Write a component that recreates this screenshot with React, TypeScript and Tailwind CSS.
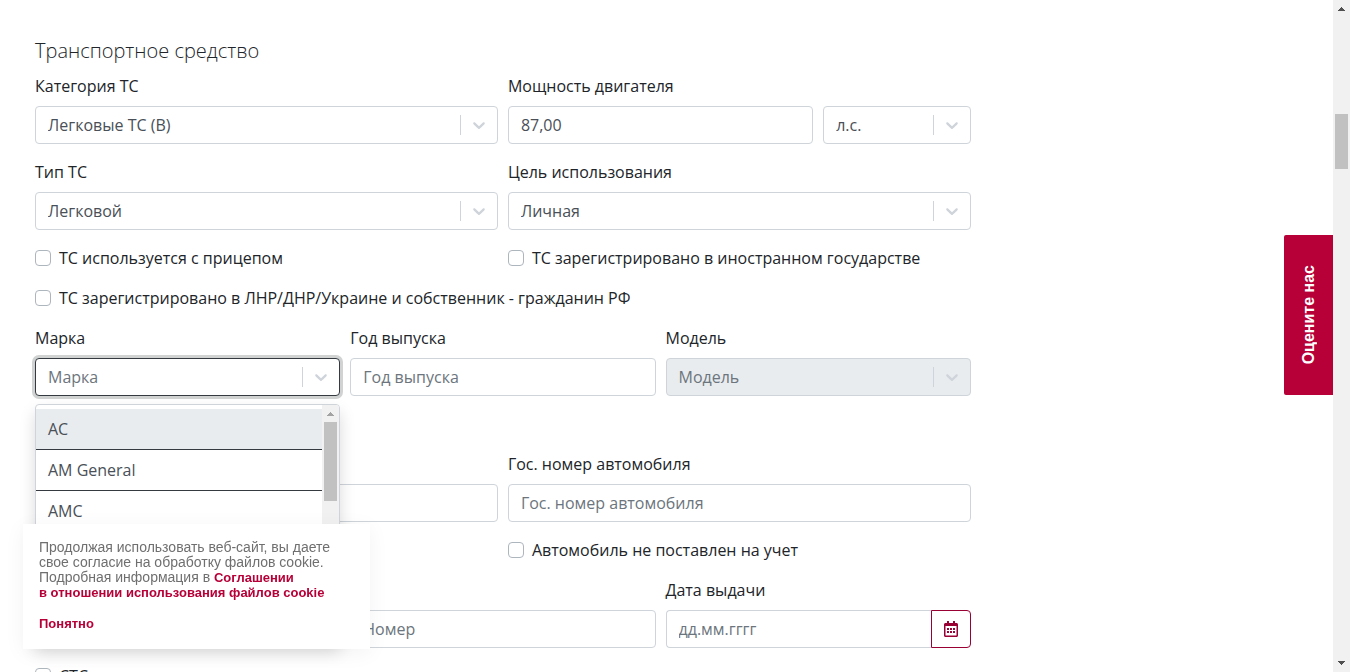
import React from "react";
import { FaRegCalendarAlt } from "react-icons/fa";

const control =
  "block h-[38px] w-full min-w-0 appearance-none rounded border border-[#ced4da] bg-white px-3 text-base text-[#495057] placeholder:text-[#6c757d] placeholder:opacity-100 outline-none";

function Label({ htmlFor, children }: { htmlFor: string; children?: React.ReactNode }) {
  return (
    <label htmlFor={htmlFor} className="mb-2 block h-6 text-[#212529]">
      {children}
    </label>
  );
}

function Indicator() {
  return (
    <span className="pointer-events-none col-start-1 row-start-1 flex items-center self-center justify-self-end pr-px">
      <span className="h-5 w-px bg-[#ced4da]" />
      <svg viewBox="0 0 20 20" className="mx-2 h-5 w-5 fill-[#ced4da]" aria-hidden="true">
        <path d="M4.516 7.548c0.436-0.446 1.043-0.481 1.576 0l3.908 3.747 3.908-3.747c0.533-0.481 1.141-0.446 1.574 0 0.436 0.445 0.408 1.197 0 1.615-0.406 0.418-4.695 4.502-4.695 4.502-0.217 0.223-0.502 0.335-0.787 0.335s-0.57-0.112-0.789-0.335c0 0-4.287-4.084-4.695-4.502s-0.436-1.17 0-1.615z" />
      </svg>
    </span>
  );
}

function Select({ id, value, label, disabled = false }: { id: string; value: string; label?: string; disabled?: boolean }) {
  return (
    <div className="grid grid-cols-1">
      <select
        id={id}
        aria-label={label}
        disabled={disabled}
        className={
          control +
          " col-start-1 row-start-1 disabled:bg-[#e9ecef] disabled:text-[#6c757d] disabled:opacity-100"
        }
      >
        <option>{value}</option>
      </select>
      <Indicator />
    </div>
  );
}

function Check({ id, children }: { id: string; children: React.ReactNode }) {
  return (
    <div className="flex h-6 gap-2">
      <input
        id={id}
        type="checkbox"
        className="mt-1 h-4 w-4 shrink-0 appearance-none rounded border border-[#adb5bd] bg-white"
      />
      <label htmlFor={id} className="whitespace-nowrap text-[#212529]">
        {children}
      </label>
    </div>
  );
}

function Arrow({ down = false, className }: { down?: boolean; className: string }) {
  return (
    <svg viewBox="0 0 7 4" className={"h-1 w-[7px] shrink-0 " + className} shapeRendering="crispEdges" aria-hidden="true">
      <path d={down ? "M0 0h7v1h-1v1h-1v1h-1v1h-1v-1h-1v-1h-1v-1h-1z" : "M3 0h1v1h1v1h1v1h1v1h-7v-1h1v-1h1v-1h1z"} />
    </svg>
  );
}

function BrandMenu() {
  return (
    <div className="absolute inset-x-0 top-full z-10 mt-2 flex h-60 overflow-hidden rounded border border-[#ced4da] bg-white shadow-[0_8px_16px_rgba(0,0,0,0.15)]">
      <ul role="listbox" id="brand-list" aria-label="Марка" className="min-w-0 flex-1 overflow-hidden pt-1 text-[#495057]">
        {["AC", "AM General", "AMC"].map((name, i) => (
          <li
            key={name}
            role="option"
            aria-selected={i === 0}
            className="border-b border-[#343a40] px-3 py-2 aria-selected:bg-[#e9ecef]"
          >
            {name}
          </li>
        ))}
      </ul>
      <div className="flex w-[17px] flex-col items-center bg-[#f1f1f1]" aria-hidden="true">
        <Arrow className="mt-[7px] mb-[6px] fill-[#a3a3a3]" />
        <div className="h-[79px] w-[13px] bg-[#c1c1c1]" />
      </div>
    </div>
  );
}

export default function App() {
  return (
    <div className="flex h-screen overflow-hidden bg-white font-['Open_Sans','Noto_Sans',sans-serif] text-base leading-6">
      <main className="min-w-0 flex-1">
        <form className="w-3/4 pt-9 pr-[29px] pl-[35px]">
          <h2 className="mb-2 text-xl leading-[30px] font-light text-[#212529]">Транспортное средство</h2>
          <div className="grid grid-cols-12 gap-x-[10px] gap-y-4">
            <div className="col-span-6">
              <Label htmlFor="category">Категория ТС</Label>
              <Select id="category" value="Легковые ТС (B)" />
            </div>
            <div className="col-span-4">
              <Label htmlFor="power">Мощность двигателя</Label>
              <input id="power" defaultValue="87,00" className={control} />
            </div>
            <div className="col-span-2 self-end">
              <Select id="power-unit" value="л.с." label="Единица мощности" />
            </div>

            <div className="col-span-6">
              <Label htmlFor="type">Тип ТС</Label>
              <Select id="type" value="Легковой" />
            </div>
            <div className="col-span-6">
              <Label htmlFor="purpose">Цель использования</Label>
              <Select id="purpose" value="Личная" />
            </div>

            <div className="col-span-6">
              <Check id="trailer">ТС используется с прицепом</Check>
            </div>
            <div className="col-span-6">
              <Check id="foreign">ТС зарегистрировано в иностранном государстве</Check>
            </div>
            <div className="col-span-12">
              <Check id="region">ТС зарегистрировано в ЛНР/ДНР/Украине и собственник - гражданин РФ</Check>
            </div>

            <div className="col-span-4">
              <Label htmlFor="brand">Марка</Label>
              <div className="relative grid grid-cols-1">
                <input
                  id="brand"
                  role="combobox"
                  aria-expanded="true"
                  aria-controls="brand-list"
                  placeholder="Марка"
                  className="col-start-1 row-start-1 block h-[38px] w-full min-w-0 rounded border border-[#343a40] bg-white px-3 text-[#495057] ring-3 ring-[#d0d3d2] outline-none placeholder:text-[#6c757d] placeholder:opacity-100"
                />
                <Indicator />
                <BrandMenu />
              </div>
            </div>
            <div className="col-span-4">
              <Label htmlFor="year">Год выпуска</Label>
              <input id="year" placeholder="Год выпуска" className={control} />
            </div>
            <div className="col-span-4">
              <Label htmlFor="model">Модель</Label>
              <Select id="model" value="Модель" disabled />
            </div>

            <div className="col-span-12 h-6" />

            <div className="col-span-6 self-end">
              <input aria-label="VIN" className={control} />
            </div>
            <div className="col-span-6">
              <Label htmlFor="plate">Гос. номер автомобиля</Label>
              <input id="plate" placeholder="Гос. номер автомобиля" className={control} />
            </div>

            <div className="col-span-6 col-start-7">
              <Check id="unregistered">Автомобиль не поставлен на учет</Check>
            </div>

            <div className="col-span-4 col-start-5 self-end">
              <input aria-label="Номер" placeholder="Номер" className={control} />
            </div>
            <div className="col-span-4">
              <Label htmlFor="issued">Дата выдачи</Label>
              <div className="flex">
                <input
                  id="issued"
                  placeholder="дд.мм.гггг"
                  className="block h-[38px] min-w-0 flex-1 rounded-l border border-r-0 border-[#ced4da] bg-white px-3 text-[#495057] outline-none placeholder:text-[#6c757d] placeholder:opacity-100"
                />
                <button
                  type="button"
                  aria-label="Открыть календарь"
                  className="flex h-[38px] w-10 shrink-0 items-center justify-center rounded-r border border-[#990033] text-[#990033]"
                >
                  <FaRegCalendarAlt className="h-4 w-[14px]" />
                </button>
              </div>
            </div>

            <div className="col-span-12">
              <Check id="sts">СТС</Check>
            </div>
          </div>
        </form>
      </main>

      <div className="flex w-[17px] shrink-0 flex-col items-center justify-between bg-[#f1f1f1] py-[7px]" aria-hidden="true">
        <div className="flex flex-col items-center gap-[103px]">
          <Arrow className="fill-[#505050]" />
          <div className="h-[55px] w-[13px] bg-[#c1c1c1]" />
        </div>
        <Arrow down className="fill-[#505050]" />
      </div>

      <button
        type="button"
        className="fixed top-[235px] right-[17px] z-20 flex h-40 w-[49px] items-center justify-center rounded-l-xs bg-[#b70038] font-['Liberation_Sans',Arial,sans-serif] text-base font-bold text-white"
      >
        <span className="rotate-180 [writing-mode:vertical-rl]">Оцените нас</span>
      </button>

      <aside className="fixed bottom-[23px] left-[23px] z-20 flex h-[125px] w-[347px] flex-col items-start gap-4 bg-white px-4 pt-4 font-['Liberation_Sans',Arial,sans-serif] text-sm leading-[15px] text-[#6f6f6f] shadow-[0_4px_20px_rgba(0,0,0,0.05)]">
        <p className="whitespace-nowrap">
          Продолжая использовать веб-сайт, вы даете
          <br />
          свое согласие на обработку файлов cookie.
          <br />
          Подробная информация в{" "}
          <a href="#cookies" className="text-[13px] font-bold text-[#b70038]">
            Соглашении
            <br />в отношении использования файлов cookie
          </a>
        </p>
        <button type="button" className="text-[13px] leading-4 font-bold text-[#b70038]">
          Понятно
        </button>
      </aside>
    </div>
  );
}
